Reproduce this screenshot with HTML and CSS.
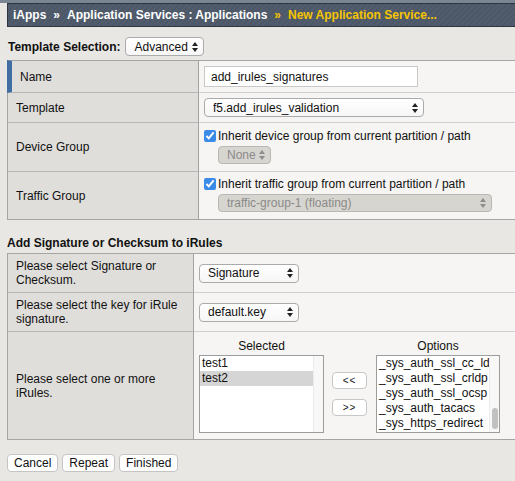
FILE: index.html
```html
<!DOCTYPE html>
<html lang="en">
<head>
  <meta charset="UTF-8">
  <title>New Application Service</title>
  <link rel="stylesheet" href="styles.css">
</head>
<body>
<div class="strip"></div>
<div class="crumbs">
  <span>iApps</span><span class="sep">»</span><span>Application Services : Applications</span><span class="sep cur">»</span><span class="cur">New Application Service...</span>
</div>

<div class="page">
  <div class="tpl-sel">
    <label>Template Selection:</label>
    <span class="sel w-adv">
      <select><option>Advanced</option></select>
      <svg class="arr" width="6" height="10" viewBox="0 0 6 10"><path d="M3 0L6 4H0z M3 10L0 6h6z" fill="#222"/></svg>
    </span>
  </div>

  <table class="grid props">
    <tr class="r1">
      <td class="lbl name">Name</td>
      <td class="val"><input class="txt" type="text" value="add_irules_signatures"></td>
    </tr>
    <tr class="r2">
      <td class="lbl">Template</td>
      <td class="val">
        <span class="sel w-tpl">
          <select><option>f5.add_irules_validation</option></select>
          <svg class="arr" width="6" height="10" viewBox="0 0 6 10"><path d="M3 0L6 4H0z M3 10L0 6h6z" fill="#222"/></svg>
        </span>
      </td>
    </tr>
    <tr class="r3">
      <td class="lbl">Device Group</td>
      <td class="val top dev">
        <label class="chk"><input type="checkbox" checked>Inherit device group from current partition / path</label>
        <span class="sel off w-none">
          <select disabled><option>None</option></select>
          <svg class="arr" width="6" height="10" viewBox="0 0 6 10"><path d="M3 0L6 4H0z M3 10L0 6h6z" fill="#8c8c8c"/></svg>
        </span>
      </td>
    </tr>
    <tr class="r4">
      <td class="lbl">Traffic Group</td>
      <td class="val top trf">
        <label class="chk"><input type="checkbox" checked>Inherit traffic group from current partition / path</label>
        <span class="sel off w-trf">
          <select disabled><option>traffic-group-1 (floating)</option></select>
          <svg class="arr" width="6" height="10" viewBox="0 0 6 10"><path d="M3 0L6 4H0z M3 10L0 6h6z" fill="#8c8c8c"/></svg>
        </span>
      </td>
    </tr>
  </table>

  <h3>Add Signature or Checksum to iRules</h3>

  <table class="grid sig">
    <tr class="s1">
      <td class="lbl">Please select Signature or Checksum.</td>
      <td class="val">
        <span class="sel w-sig">
          <select><option>Signature</option><option>Checksum</option></select>
          <svg class="arr" width="6" height="10" viewBox="0 0 6 10"><path d="M3 0L6 4H0z M3 10L0 6h6z" fill="#222"/></svg>
        </span>
      </td>
    </tr>
    <tr class="s2">
      <td class="lbl">Please select the key for iRule signature.</td>
      <td class="val">
        <span class="sel w-sig">
          <select><option>default.key</option></select>
          <svg class="arr" width="6" height="10" viewBox="0 0 6 10"><path d="M3 0L6 4H0z M3 10L0 6h6z" fill="#222"/></svg>
        </span>
      </td>
    </tr>
    <tr class="s3">
      <td class="lbl">Please select one or more iRules.</td>
      <td class="val top pick-cell">
        <div class="picker">
          <div class="col-head">Selected</div>
          <div></div>
          <div class="col-head">Options</div>

          <div class="list">
            <div class="items">
              <div class="item">test1</div>
              <div class="item on">test2</div>
            </div>
            <div class="track"></div>
          </div>
          <div class="moves">
            <button class="mv">&lt;&lt;</button>
            <button class="mv">&gt;&gt;</button>
          </div>
          <div class="list">
            <div class="items">
              <div class="item">_sys_auth_ssl_cc_ld</div>
              <div class="item">_sys_auth_ssl_crldp</div>
              <div class="item">_sys_auth_ssl_ocsp</div>
              <div class="item">_sys_auth_tacacs</div>
              <div class="item">_sys_https_redirect</div>
            </div>
            <div class="track"><div class="thumb"></div></div>
          </div>
        </div>
      </td>
    </tr>
  </table>

  <div class="actions">
    <button class="btn">Cancel</button>
    <button class="btn">Repeat</button>
    <button class="btn">Finished</button>
  </div>
</div>
</body>
</html>
```

FILE: styles.css
```css
body { margin: 0; background: #e8e7e3; font: 12px "Liberation Sans", Arial, Helvetica, sans-serif; color: #111; overflow: hidden; }

/* breadcrumb bar */
.strip { height: 3px; background: #7b8695; }
.crumbs { margin-left: 7px; width: 520px; height: 22px; line-height: 22px; padding-left: 5px; border: 1px solid #2d3541; border-right: 0; background: repeating-linear-gradient(135deg, #4c5868 0 2px, #515d6d 2px 4px); color: #fff; font-weight: bold; white-space: nowrap; }
.crumbs .sep { margin: 0 7px; }
.crumbs .cur { color: #f6c500; }

.page { padding: 10px 0 0 7px; }
.tpl-sel { display: flex; align-items: center; gap: 5px; height: 19px; padding-left: 1px; font-weight: bold; }

/* select boxes */
.sel { position: relative; display: inline-block; vertical-align: middle; }
.sel select { -webkit-appearance: none; appearance: none; box-sizing: border-box; width: 100%; height: 19px; padding: 0 12px 0 8px; border: 1px solid #ababab; border-radius: 4px; background: linear-gradient(#fff, #f6f6f6); font: 12px "Liberation Sans", Arial, Helvetica, sans-serif; color: #111; display: block; }
.sel .arr { position: absolute; right: 6px; top: 50%; margin-top: -5px; pointer-events: none; }
.sel.off select { background: #d7d5cf; border-color: #bab8b2; color: #8a8a8a; opacity: 1; height: 18px; }
.w-adv { width: 79px; }
.w-tpl { width: 220px; }
.w-none { width: 53px; margin: 2px 0 0 14px; display: block; }
.w-trf { width: 274px; margin: 2px 0 0 14px; display: block; }
.w-sig { width: 100px; }

/* property tables */
.grid { width: 520px; border-spacing: 0; table-layout: fixed; }
.grid td { box-sizing: border-box; padding: 0; vertical-align: middle; background: #f6f5f3; border-bottom: 1px solid #d0d0d0; }
.grid tr:first-child td { border-top: 1px solid #a5a5a5; }
.grid tr:last-child td { border-bottom-color: #a5a5a5; }
.grid td.lbl { background: #dfdedb; border-left: 1px solid #a5a5a5; border-right: 1px solid #a3a3a3; padding: 0 8px; line-height: 14px; }
.grid tr:not(:last-child) td.lbl { border-bottom-color: #b6b6b6; }
.grid td.name { border-left: 5px solid #436ea3; padding-left: 8px; }
.grid td.val { padding-left: 5px; }
.grid td.top { vertical-align: top; }

.props { margin-top: 4px; }
.props td.lbl { width: 192px; }
.props .r1 td { height: 33px; }
.props .r2 td { height: 30px; }
.props .r3 td { height: 49px; }
.props .r4 td { height: 48px; }
.props td.dev { padding-top: 5px; }
.props td.trf { padding-top: 4px; }

.txt { box-sizing: border-box; width: 214px; height: 21px; padding: 0 6px; border: 1px solid #c9c9c9; background: #fff; font: 12px "Liberation Sans", Arial, Helvetica, sans-serif; color: #111; display: block; }

.chk { display: flex; align-items: center; gap: 2px; height: 16px; }
.chk input { width: 12px; height: 12px; margin: 0; accent-color: #3a8ae8; }

h3 { margin: 15px 0 0 0; font-size: 12px; line-height: 16px; }

.sig { margin-top: 2px; }
.sig td.lbl { width: 187px; }
.sig .s1 td { height: 40px; }
.sig .s2 td { height: 39px; }
.sig .s3 td { height: 108px; }
.sig td.pick-cell { padding-top: 6px; }

/* dual list picker */
.picker { display: grid; grid-template-columns: 125px 35px 125px; grid-template-rows: 16px 78px; column-gap: 8px; row-gap: 1px; }
.picker > :nth-child(3n) { margin-left: 1px; }
.col-head { text-align: center; line-height: 16px; }
.list { display: flex; box-sizing: border-box; height: 78px; border: 1px solid #9d9d9d; background: #fff; }
.items { flex: 1; overflow: hidden; white-space: nowrap; }
.item { height: 15px; line-height: 15px; padding-left: 2px; }
.item.on { background: #d5d5d5; }
.track { width: 9px; background: #f8f8f8; border-left: 1px solid #ebebeb; }
.thumb { width: 6px; height: 21px; margin: 52px auto 0; border-radius: 3px; background: #c1c1c1; }
.moves { display: flex; flex-direction: column; justify-content: center; gap: 10px; }
.mv { box-sizing: border-box; width: 35px; height: 17px; padding: 0; border: 1px solid #c6c6c6; border-radius: 4px; background: #fff; font: 10px "Liberation Sans", Arial, sans-serif; letter-spacing: 1px; color: #111; }

.actions { display: flex; gap: 4px; margin-top: 14px; }
.btn { box-sizing: border-box; height: 18px; padding: 0 6px; border: 1px solid #c4c4c4; border-radius: 4px; background: #fff; font: 12px "Liberation Sans", Arial, Helvetica, sans-serif; color: #111; }
```
